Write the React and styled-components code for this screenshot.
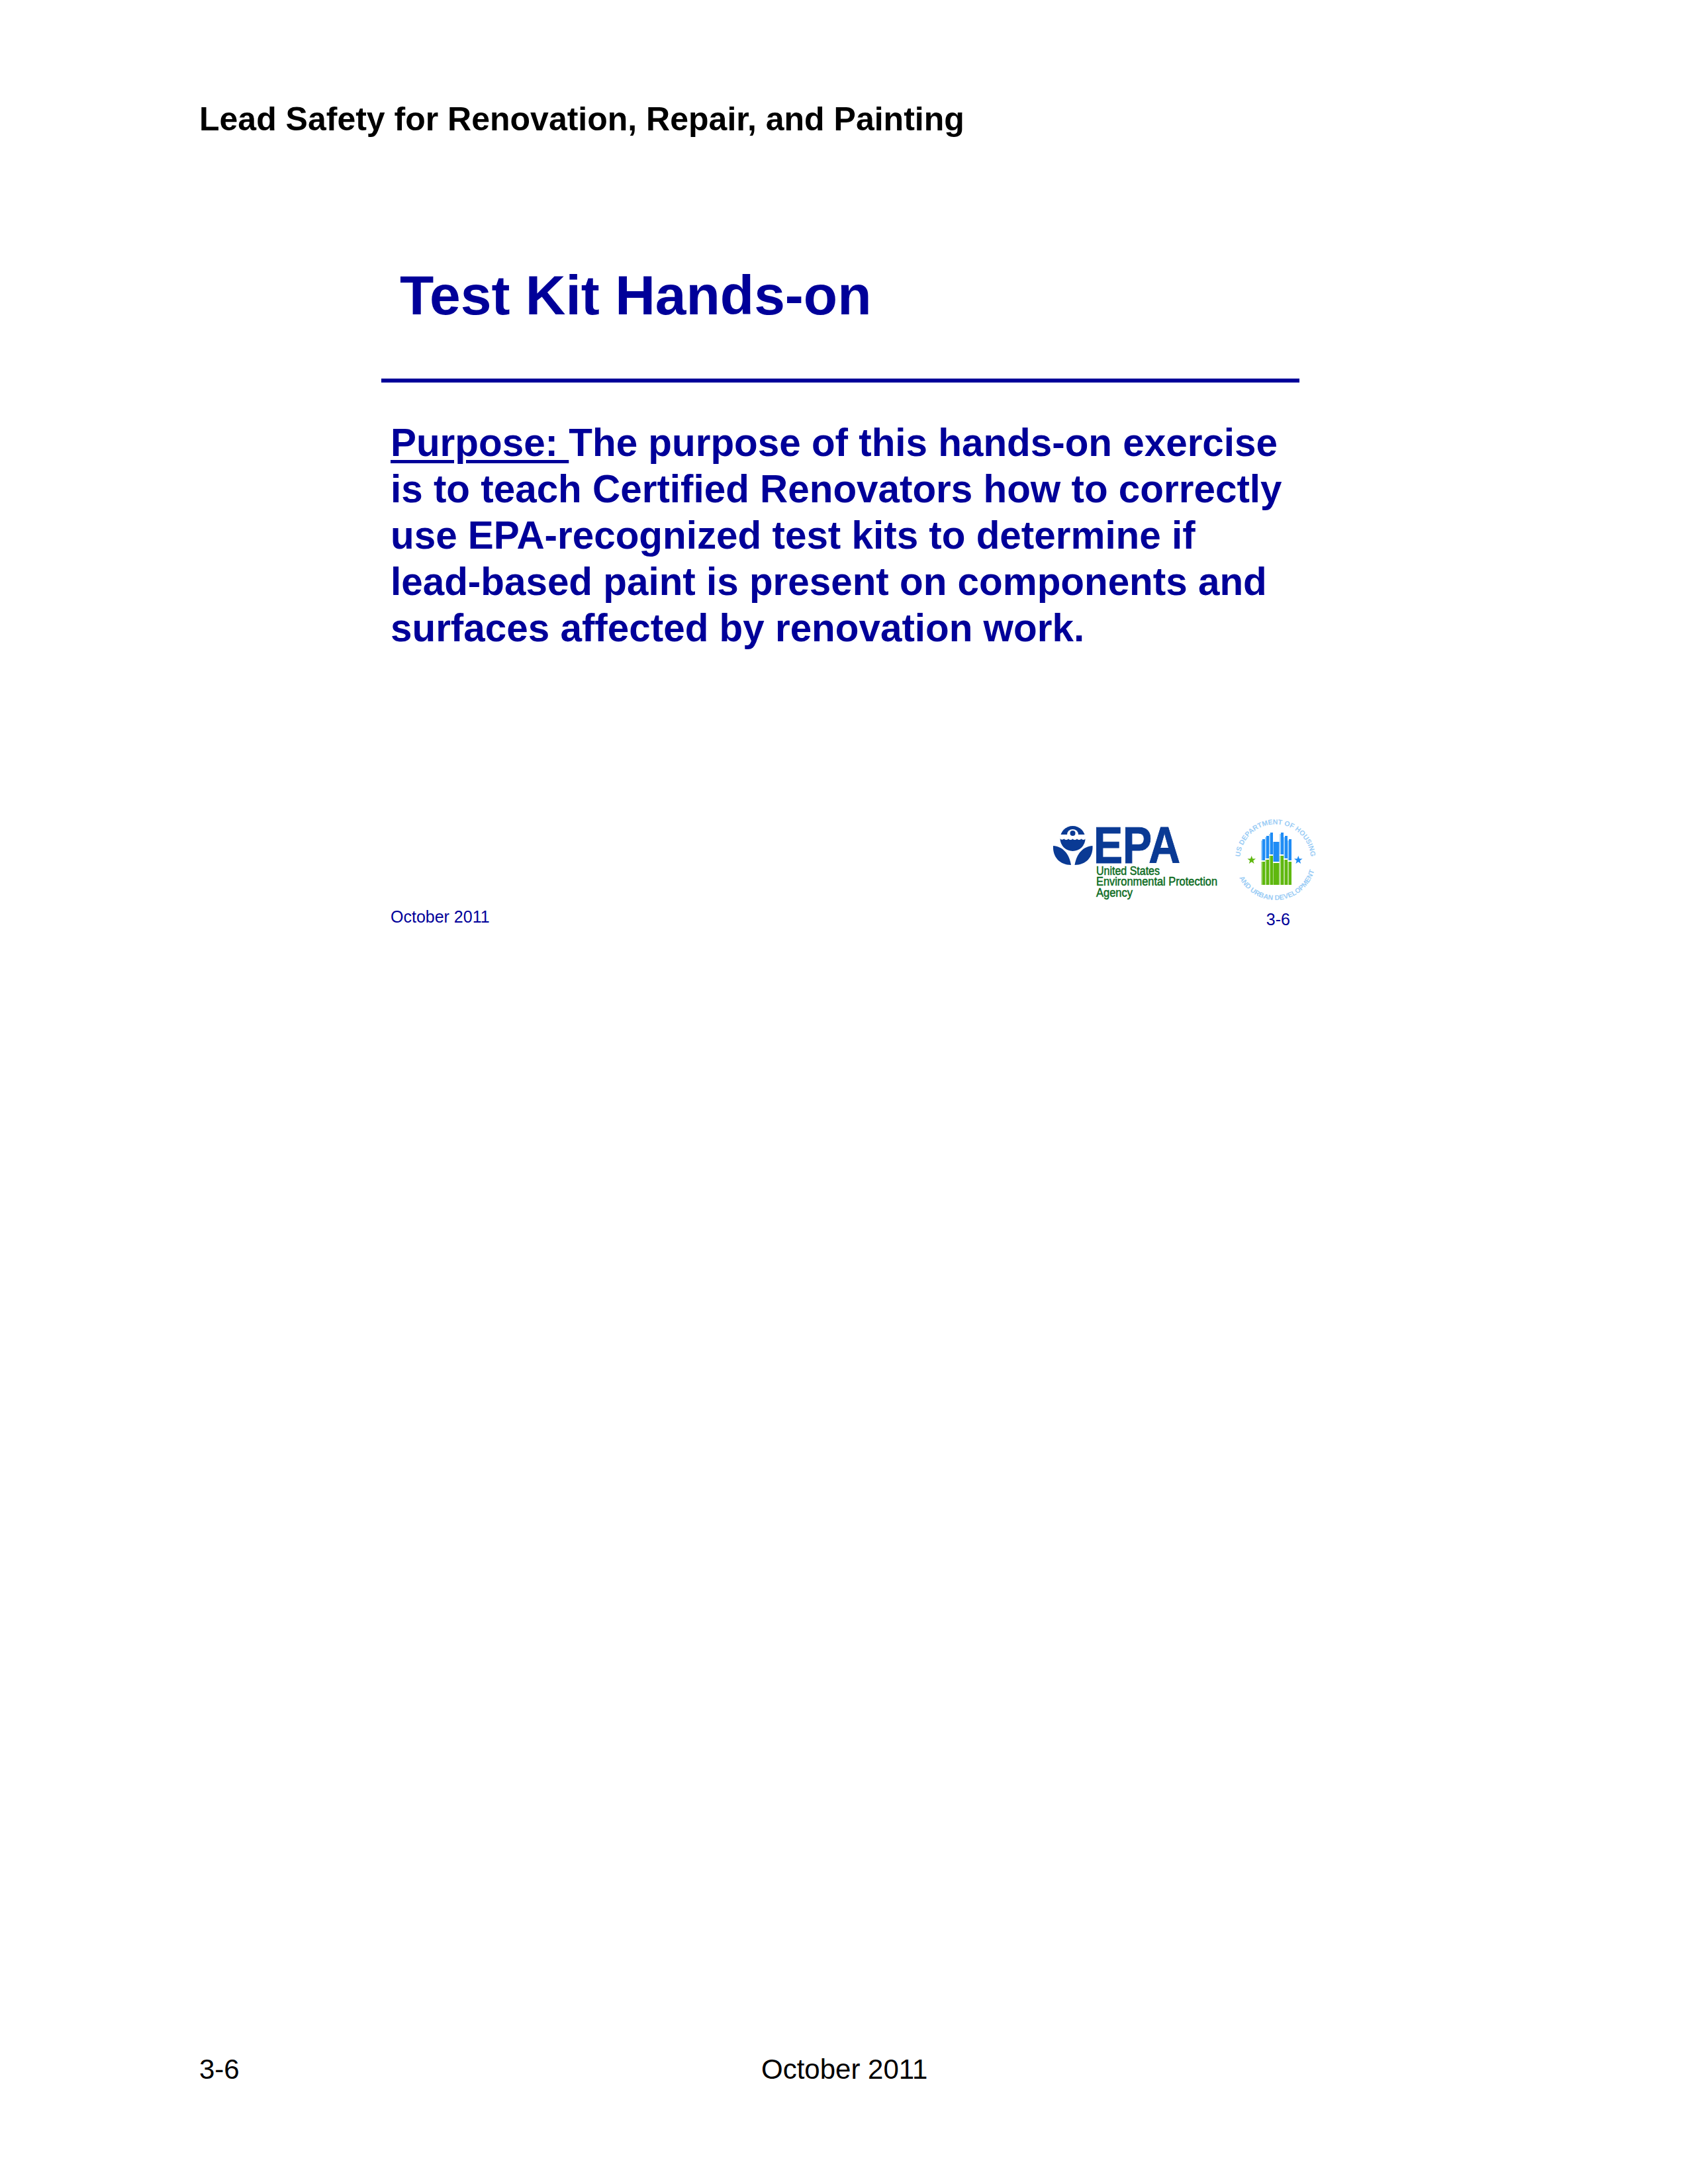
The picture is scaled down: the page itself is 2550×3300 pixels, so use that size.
import React from 'react';
import styled, { createGlobalStyle } from 'styled-components';

const NAVY = '#000099';

const GlobalStyle = createGlobalStyle`
  html, body {
    margin: 0;
    padding: 0;
    background: #fff;
  }
  body {
    font-family: "Liberation Sans", Arial, sans-serif;
  }
`;

const Page = styled.div`
  width: 2550px;
  height: 3300px;
  display: flex;
  flex-direction: column;
  box-sizing: border-box;
  padding: 150px 0 148px 301px;
`;

const RunningHead = styled.div`
  font-size: 50px;
  line-height: 60px;
  font-weight: 700;
  color: #000;
`;

const Slide = styled.section`
  width: 1415px;
  margin: 186px 0 0 275px;
  color: ${NAVY};
`;

const SlideTitle = styled.h1`
  margin: 0 0 76px 28px;
  font-size: 84px;
  line-height: 100px;
  font-weight: 700;
`;

const Rule = styled.hr`
  width: 1387px;
  height: 6px;
  margin: 0 0 56px;
  border: 0;
  background: ${NAVY};
`;

const Purpose = styled.p`
  margin: 0 0 0 14px;
  font-size: 58.4px;
  line-height: 70px;
  font-weight: 700;
`;

const Line = styled.span`
  display: block;
  white-space: pre;
`;

const Label = styled.span`
  text-decoration: underline;
  text-decoration-thickness: 5px;
  text-underline-offset: 6px;
`;

const LogoRow = styled.div`
  display: flex;
  justify-content: flex-end;
  gap: 6px;
  margin-top: 249px;
`;

const SlideFoot = styled.div`
  display: flex;
  justify-content: space-between;
  margin: 1px 42px 0 14px;
  font-size: 25px;
  line-height: 28px;
`;

const PageNo = styled.span`
  position: relative;
  top: 4px;
`;

const PageFoot = styled.footer`
  display: flex;
  margin-top: auto;
  font-size: 42px;
  line-height: 50px;
  color: #000;
`;

const FootNo = styled.span`
  width: 849px;
`;

const EpaLogo = () => (
  <svg width="270" height="137" viewBox="0 -12 270 137">
    <circle cx="35.5" cy="22" r="19" fill="#0a3a94" />
    <path d="M16 22 q3 3 6.5 0.5 q3 3 6.5 0 q3 3 6.5 0 q3 3 6.5 0 q3 3 6.5 0 q3 3 7 -0.5 v-6 h-39z" fill="#fff" />
    <path d="M27 16 a8.5 8 0 0 1 17 0 l-3 3 h-11z" fill="#fff" />
    <circle cx="35.5" cy="14" r="4" fill="#0a3a94" />
    <path d="M6 33 C20 34 30 44 33 62 C16 62 5 50 6 33z" fill="#0a3a94" />
    <path d="M65.5 33 C51.5 34 41.5 44 38.5 62 C55.5 62 66.5 50 65.5 33z" fill="#0a3a94" />
    <text x="67" y="59" fontFamily="Liberation Sans, Arial, sans-serif" fontWeight="700" fontSize="78" fill="#0a3a94" stroke="#0a3a94" strokeWidth="1" textLength="131" lengthAdjust="spacingAndGlyphs">EPA</text>
    <g fontFamily="Liberation Sans, Arial, sans-serif" fontSize="17.5" fill="#0b6b1e" stroke="#0b6b1e" strokeWidth="0.5">
      <text x="71" y="77" textLength="96" lengthAdjust="spacingAndGlyphs">United States</text>
      <text x="71" y="93" textLength="183" lengthAdjust="spacingAndGlyphs">Environmental Protection</text>
      <text x="71" y="110" textLength="55" lengthAdjust="spacingAndGlyphs">Agency</text>
    </g>
  </svg>
);

const towers = [
  { x: 46, w: 4, top: 33, green: 67 },
  { x: 52, w: 4, top: 28, green: 64 },
  { x: 58, w: 4, top: 23, green: 58 },
  { x: 62.5, w: 9, top: 37, green: 69, solid: true },
  { x: 74, w: 4, top: 23, green: 58 },
  { x: 80, w: 4, top: 28, green: 64 },
  { x: 86, w: 4, top: 33, green: 67 },
];

const HudSeal = () => (
  <svg width="130" height="137" viewBox="0 -2 130 137">
    <defs>
      <path id="hud-top" d="M12.7 72 A53.6 53.6 0 1 1 118.7 72" />
      <path id="hud-bottom" d="M4.7 64 A61 61 0 0 0 126.7 64" />
    </defs>
    <g fontFamily="Liberation Sans, Arial, sans-serif" fontWeight="700" fontSize="10.5" fill="#9accf5">
      <text textAnchor="middle">
        <textPath href="#hud-top" startOffset="50%">US DEPARTMENT OF HOUSING</textPath>
      </text>
      <text textAnchor="middle">
        <textPath href="#hud-bottom" startOffset="53%">AND URBAN DEVELOPMENT</textPath>
      </text>
    </g>
    {towers.map((t) => (
      <g key={t.x}>
        <rect x={t.x} y={t.top} width={t.w} height={t.green - t.top - 2} fill="#1f8cf5" />
        {!t.solid && <rect x={t.x - 2} y={t.top + 2} width="2" height={t.green - t.top - 4} fill="#9fd0fa" />}
        <rect x={t.x} y={t.green} width={t.w} height={102 - t.green} fill="#5fb80f" />
        {!t.solid && <rect x={t.x - 2} y={t.green} width="2" height={102 - t.green} fill="#b5dd90" />}
      </g>
    ))}
    <polygon points="29.7,58 31.3,62.5 36,62.5 32.2,65.4 33.6,70 29.7,67.2 25.8,70 27.2,65.4 23.4,62.5 28.1,62.5" fill="#5fb80f" />
    <polygon points="100.3,58 101.9,62.5 106.6,62.5 102.8,65.4 104.2,70 100.3,67.2 96.4,70 97.8,65.4 94,62.5 98.7,62.5" fill="#1f8cf5" />
  </svg>
);

const App = () => (
  <Page>
    <GlobalStyle />
    <RunningHead>Lead Safety for Renovation, Repair, and Painting</RunningHead>
    <Slide>
      <SlideTitle>Test Kit Hands-on</SlideTitle>
      <Rule />
      <Purpose>
        <Line><Label>Purpose: </Label>The purpose of this hands-on exercise</Line>
        <Line>is to teach Certified Renovators how to correctly</Line>
        <Line>use EPA-recognized test kits to determine if</Line>
        <Line>lead-based paint is present on components and</Line>
        <Line>surfaces affected by renovation work.</Line>
      </Purpose>
      <LogoRow>
        <EpaLogo />
        <HudSeal />
      </LogoRow>
      <SlideFoot>
        <span>October 2011</span>
        <PageNo>3-6</PageNo>
      </SlideFoot>
    </Slide>
    <PageFoot>
      <FootNo>3-6</FootNo>
      <span>October 2011</span>
    </PageFoot>
  </Page>
);

export default App;
